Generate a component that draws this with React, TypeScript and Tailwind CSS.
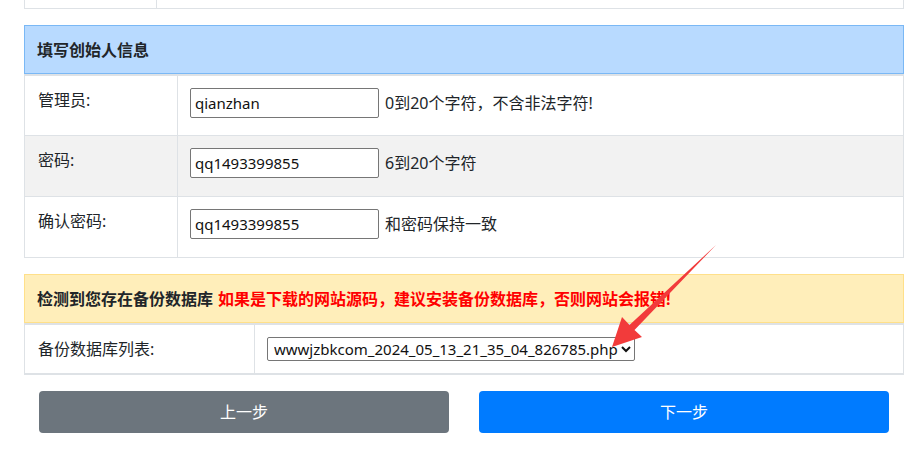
import React from "react";

const font = "font-['Noto_Sans','Noto_Sans_CJK_SC',sans-serif]";

interface RowProps {
  label: string;
  value: string;
  hint: string;
  gray?: boolean;
  thick?: boolean;
}

const FieldRow: React.FC<RowProps> = ({ label, value, hint, gray, thick }) => (
  <div
    className={`flex h-[61px] border-[#dee2e6] ${thick ? "border-t-2" : "border-t"} ${
      gray ? "bg-[#f2f2f2]" : "bg-white"
    }`}
  >
    <div className="w-[153px] shrink-0 border-r border-[#dee2e6] pl-[13px] pt-[12px] text-[16px] leading-[24px]">
      {label}
    </div>
    <div className="flex items-start pl-[12px] pt-[12px]">
      <input
        readOnly
        value={value}
        className="h-[30px] w-[189px] rounded-[2px] border border-[#767676] bg-white px-[4px] text-[15px] text-[#111] outline-none"
      />
      <span className="ml-[6px] mt-[3px] text-[16px] leading-[24px]">{hint}</span>
    </div>
  </div>
);

export default function App() {
  return (
    <div className={`relative h-[466px] w-[921px] overflow-hidden bg-white text-[#212529] ${font}`}>
      <div className="ml-[24px] w-[880px]">
        {/* tail of the previous table */}
        <div className="flex h-[9px] border-x border-b border-[#dee2e6]">
          <div className="w-[132px] border-r border-[#dee2e6]" />
        </div>

        {/* founder info */}
        <div className="mt-[16px] border-x border-b border-[#dee2e6]">
          <div className="-mx-px flex h-[49px] items-center border border-[#7ab8f5] bg-[#b8daff] pl-[12px]">
            <span className="text-[16px] font-bold">填写创始人信息</span>
          </div>
          <FieldRow label="管理员:" value="qianzhan" hint="0到20个字符，不含非法字符!" thick />
          <FieldRow label="密码:" value="qq1493399855" hint="6到20个字符" gray />
          <FieldRow label="确认密码:" value="qq1493399855" hint="和密码保持一致" />
        </div>

        {/* backup database */}
        <div className="mt-[16px] border-x border-b-2 border-[#dee2e6]">
          <div className="-mx-px flex h-[49px] items-center border border-[#ffe08a] bg-[#ffeeba] pl-[12px] text-[16px] font-bold">
            <span>检测到您存在备份数据库</span>
            <span className="ml-[5px] text-[#ff0000]">如果是下载的网站源码，建议安装备份数据库，否则网站会报错!</span>
          </div>
          <div className="flex h-[50px] border-t-2 border-[#dee2e6] bg-white">
            <div className="flex w-[230px] shrink-0 items-center border-r border-[#dee2e6] pl-[13px] text-[16px]">
              备份数据库列表:
            </div>
            <div className="flex items-center pl-[12px]">
              <select className="h-[24px] w-[368px] rounded-[2px] border border-[#767676] bg-white pl-[2px] text-[15px] text-[#111]">
                <option>wwwjzbkcom_2024_05_13_21_35_04_826785.php</option>
              </select>
            </div>
          </div>
        </div>

        {/* buttons */}
        <div className="mt-[16px] flex gap-[30px] px-[15px]">
          <button className="h-[42px] flex-1 rounded-[4px] bg-[#6c757d] text-[16px] text-white">上一步</button>
          <button className="h-[42px] flex-1 rounded-[4px] bg-[#007bff] text-[16px] text-white">下一步</button>
        </div>
      </div>

      {/* annotation arrow */}
      <svg className="pointer-events-none absolute left-0 top-0" width="921" height="466" viewBox="0 0 921 466">
        <polygon
          points="612,347 622,317 629.5,324.9 716,245 634.5,329.9 642,337"
          fill="#f23b3b"
        />
      </svg>
    </div>
  );
}
